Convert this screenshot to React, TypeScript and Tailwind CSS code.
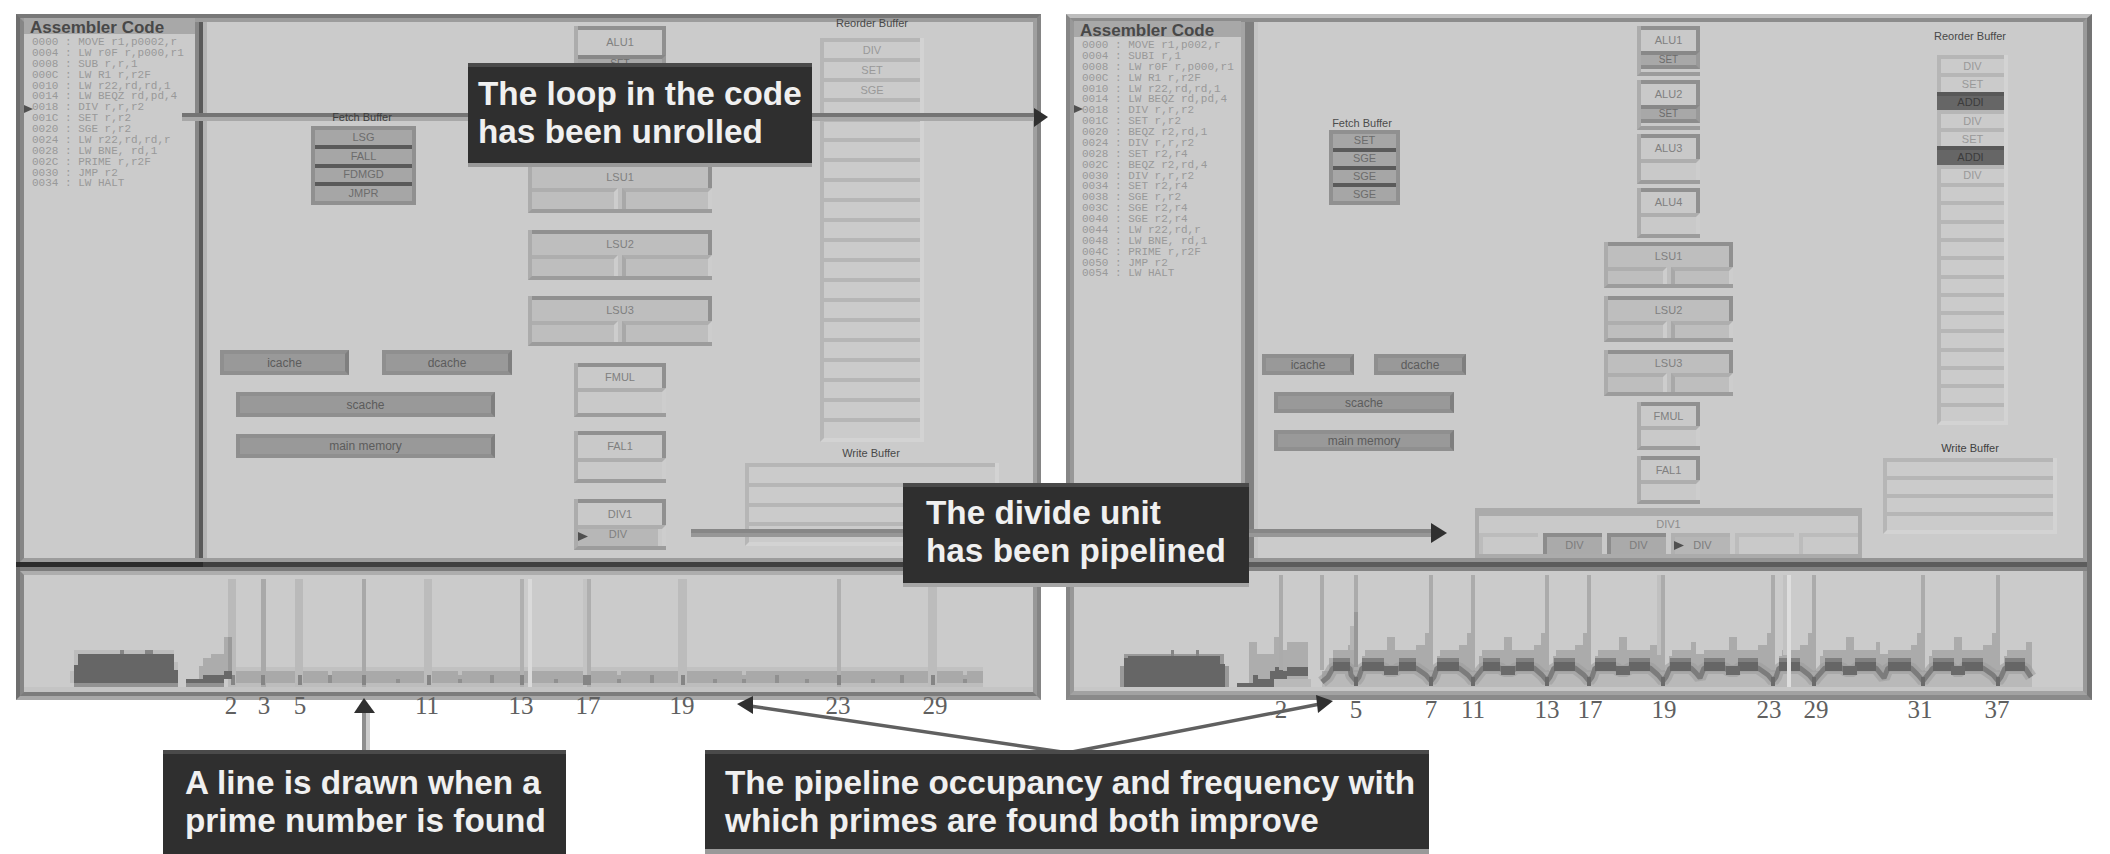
import React from "react";

const SANS = "font-['Liberation_Sans',Arial,sans-serif]";

const leftCode = [
  "0000 : MOVE r1,p0002,r", "0004 : LW r0F r,p000,r1", "0008 : SUB r,r,1", "000C : LW R1 r,r2F",
  "0010 : LW r22,rd,rd,1", "0014 : LW BEQZ rd,pd,4", "0018 : DIV r,r,r2", "001C : SET r,r2",
  "0020 : SGE r,r2", "0024 : LW r22,rd,rd,r", "0028 : LW BNE, rd,1", "002C : PRIME r,r2F",
  "0030 : JMP r2", "0034 : LW HALT",
];

const rightCode = [
  "0000 : MOVE r1,p002,r", "0004 : SUBI r,1", "0008 : LW r0F r,p000,r1", "000C : LW R1 r,r2F",
  "0010 : LW r22,rd,rd,1", "0014 : LW BEQZ rd,pd,4", "0018 : DIV r,r,r2", "001C : SET r,r2",
  "0020 : BEQZ r2,rd,1", "0024 : DIV r,r,r2", "0028 : SET r2,r4", "002C : BEQZ r2,rd,4",
  "0030 : DIV r,r,r2", "0034 : SET r2,r4", "0038 : SGE r,r2", "003C : SGE r2,r4",
  "0040 : SGE r2,r4", "0044 : LW r22,rd,r", "0048 : LW BNE, rd,1", "004C : PRIME r,r2F",
  "0050 : JMP r2", "0054 : LW HALT",
];

function CodePanel({ lines, className }: { lines: string[]; className: string }) {
  return (
    <div className={`flex flex-col bg-[#cbcbcb] ${className}`}>
      <h2 className={`h-4 pl-[6px] text-[17px] leading-[19px] font-bold text-[#484848] bg-[#a8a8a8] whitespace-nowrap ${SANS}`}>
        Assembler Code
      </h2>
      <div className="flex flex-col pl-2 pt-[3px] font-['Liberation_Mono',monospace] text-[11px] leading-[10.88px] text-[#999999]">
        {lines.map((l, i) => (
          <div key={i} className="whitespace-pre">{l}</div>
        ))}
      </div>
    </div>
  );
}

const at = (x: number, y: number, w?: number, h?: number): React.CSSProperties => ({ left: x, top: y, width: w, height: h });

function Label({ x, y, text, tone = "text-[#808080]", size = "text-[11px]" }: { x: number; y: number; text: string; tone?: string; size?: string }) {
  return (
    <div className="absolute w-0 h-0 flex items-center justify-center" style={at(x, y)}>
      <span className={`whitespace-nowrap leading-none ${size} ${tone} ${SANS}`}>{text}</span>
    </div>
  );
}

type UnitProps = { x: number; y: number; w: number; h: number; head: number; label: string; slots?: number; shaded?: boolean; busy?: string };

function Unit({ x, y, w, h, head, label, slots = 1, shaded, busy }: UnitProps) {
  return (
    <div className={`absolute flex flex-col border-l-4 border-l-[#acacac] border-b-4 border-b-[#9c9c9c] ${shaded ? "bg-[#bebebe]" : "bg-[#c9c9c9]"}`} style={at(x, y, w, h)}>
      <div className="flex items-center justify-center border-t-4 border-r-4 border-[#909090] shrink-0" style={{ height: head }}>
        <span className={`text-[11px] leading-none text-[#808080] ${SANS}`}>{label}</span>
      </div>
      <div className="flex grow gap-1">
        {Array.from({ length: slots }, (_, i) => (
          <div
            key={i}
            className={`grow basis-0 border-t-4 border-r-4 flex items-center justify-center ${i > 0 ? "border-l-4 border-l-[#a8a8a8]" : ""} ${busy ? "bg-[#a8a8a8] border-t-[#888888] border-r-[#999999] border-b-4 border-b-[#8c8c8c] mb-1" : "border-t-[#aeaeae] border-r-[#cdcdcd]"}`}
          >
            {busy && <span className={`text-[10px] leading-none text-[#6c6c6c] ${SANS}`}>{busy}</span>}
          </div>
        ))}
      </div>
    </div>
  );
}

function Memory({ x, y, w, h, label }: { x: number; y: number; w: number; h: number; label: string }) {
  return (
    <div className="absolute flex items-center justify-center bg-[#999999] border-4 border-[#8f8f8f] border-r-[#7f7f7f]" style={at(x, y, w, h)}>
      <span className={`text-[12px] leading-none text-[#5c5c5c] whitespace-nowrap ${SANS}`}>{label}</span>
    </div>
  );
}

function Fetch({ x, y, w, h, rows }: { x: number; y: number; w: number; h: number; rows: string[] }) {
  return (
    <div className="absolute flex flex-col border-4 border-[#909090] bg-[#5a5a5a] gap-1" style={at(x, y, w, h)}>
      {rows.map((r, i) => (
        <div key={i} className="grow basis-0 flex items-center justify-center bg-[#a6a6a6]">
          <span className={`text-[11px] leading-none text-[#6c6c6c] ${SANS}`}>{r}</span>
        </div>
      ))}
    </div>
  );
}

function Buffer({ x, y, w, h, count, rows = [] }: { x: number; y: number; w: number; h: number; count: number; rows?: string[] }) {
  return (
    <div className="absolute flex flex-col border-l-4 border-l-[#b6b6b6] border-r-4 border-r-[#d3d3d3] border-b-4 border-b-[#d3d3d3]" style={at(x, y, w, h)}>
      {Array.from({ length: count }, (_, i) => {
        const hot = rows[i] === "ADDI";
        return (
          <div key={i} className={`grow basis-0 min-h-0 border-t-4 flex items-center justify-center ${hot ? "bg-[#666666] border-t-[#585858] -ml-1" : "border-t-[#b6b6b6]"}`}>
            <span className={`text-[11px] leading-none ${hot ? "text-[#3c3c3c]" : "text-[#999999]"} ${SANS}`}>{rows[i] ?? ""}</span>
          </div>
        );
      })}
    </div>
  );
}

function DivideUnit() {
  const cells = ["", "DIV", "DIV", "DIV", "", ""];
  return (
    <div className="absolute left-[1475px] top-[508px] w-[387px] h-[50px] flex flex-col border-4 border-t-8 border-[#ababab] bg-[#c9c9c9]">
      <div className="h-[17px] flex items-center justify-center">
        <span className={`text-[11px] leading-none text-[#8c8c8c] ${SANS}`}>DIV1</span>
      </div>
      <div className="flex grow gap-[5px]">
        {cells.map((c, i) => (
          <div
            key={i}
            className={`grow basis-0 flex items-center justify-center border-t-4 border-l-4 ${c ? (i < 3 ? "bg-[#aaaaaa] border-[#8c8c8c]" : "bg-[#b6b6b6] border-[#b0b0b0]") : "border-[#bcbcbc]"}`}
          >
            <span className={`text-[11px] leading-none text-[#7c7c7c] ${SANS}`}>{c}</span>
          </div>
        ))}
      </div>
    </div>
  );
}

function Callout({ className, lines }: { className: string; lines: string[] }) {
  return (
    <div className={`absolute bg-[#2f2f2f] border-t-4 border-t-[#4a4a4a] text-[#f0f0f0] font-bold text-[33.3px] leading-[38px] whitespace-nowrap ${SANS} ${className}`}>
      {lines.map((l) => (
        <div key={l}>{l}</div>
      ))}
    </div>
  );
}

type Tick = [number, string];

const leftTicks: Tick[] = [[231, "2"], [264, "3"], [300, "5"], [427, "11"], [521, "13"], [588, "17"], [682, "19"], [838, "23"], [935, "29"]];
const rightTicks: Tick[] = [[1281, "2"], [1356, "5"], [1431, "7"], [1473, "11"], [1547, "13"], [1590, "17"], [1664, "19"], [1769, "23"], [1816, "29"], [1920, "31"], [1997, "37"]];

function Ticks({ items, y }: { items: Tick[]; y: number }) {
  return (
    <>
      {items.map(([x, t]) => (
        <div key={t} className="absolute w-0 flex justify-center" style={at(x, y)}>
          <span className="font-['Liberation_Serif',serif] text-[25px] leading-[24px] text-[#606060]">{t}</span>
        </div>
      ))}
    </>
  );
}

function LeftChart() {
  const lines: [number, number, string][] = [
    [228, 8, "#bababa"], [261, 5, "#a9a9a9"], [295, 8, "#bababa"], [362, 4, "#a8a8a8"], [424, 8, "#bcbcbc"],
    [520, 4, "#b0b0b0"], [583, 4, "#c3c3c3"], [587, 4, "#afafaf"], [678, 9, "#bcbcbc"], [837, 4, "#b0b0b0"], [928, 9, "#bcbcbc"],
  ];
  const marks = [328, 396, 458, 490, 554, 617, 650, 713, 742, 775, 805, 871, 900, 963];
  return (
    <svg className="block" width="1009" height="112" viewBox="24 575 1009 112" shapeRendering="crispEdges">
      <rect x="232" y="667" width="751" height="4" fill="#c1c1c1" />
      <rect x="232" y="671" width="751" height="12" fill="#a9a9a9" />
      <rect x="232" y="683" width="751" height="4" fill="#bdbdbd" />
      {marks.map((m, i) => (
        <rect key={m} x={m} y={i % 3 === 0 ? 675 : 679} width="4" height={i % 3 === 0 ? 8 : 4} fill="#909090" />
      ))}
      {[328, 458, 617, 742, 963].map((m) => (
        <rect key={m} x={m} y="671" width="4" height="4" fill="#c0c0c0" />
      ))}
      {lines.map(([x, w, f]) => (
        <rect key={x} x={x} y="579" width={w} height="108" fill={f} />
      ))}
      {lines.map(([x, w]) => (
        <rect key={x} x={x + (w > 5 ? 3 : 0)} y="675" width="4" height="10" fill="#858585" />
      ))}
      <rect x="528" y="579" width="4" height="108" fill="#dadada" />
      <path d="M70 683V671H74V650H174V662H178V683Z" fill="#bcbcbc" />
      <path d="M74 683V665H78V654H174V670H178V683Z" fill="#666666" />
      <path d="M120 650H124V654H120ZM145 650H153V654H145Z" fill="#858585" />
      <rect x="74" y="683" width="104" height="4" fill="#929292" />
      <path d="M199 679V666H203V658H211V654H224V637H232V679Z" fill="#acacac" />
      <rect x="228" y="637" width="4" height="40" fill="#9a9a9a" />
      <path d="M186 683V679H203V675H224V671H232V679H224V683Z" fill="#686868" />
      <path d="M186 683H224V687H186Z" fill="#929292" />
    </svg>
  );
}

type Plateau = { a: number; b: number; gap: "prime" | "bump" | "deep" | "end"; p: number };

const plateaus: Plateau[] = [
  { a: 1333, b: 1350, gap: "prime", p: 1356 },
  { a: 1362, b: 1384, gap: "bump", p: 1391 },
  { a: 1399, b: 1416, gap: "prime", p: 1431 },
  { a: 1437, b: 1459, gap: "prime", p: 1473 },
  { a: 1483, b: 1500, gap: "bump", p: 1508 },
  { a: 1516, b: 1534, gap: "prime", p: 1547 },
  { a: 1554, b: 1575, gap: "prime", p: 1589 },
  { a: 1595, b: 1616, gap: "bump", p: 1623 },
  { a: 1629, b: 1650, gap: "prime", p: 1663 },
  { a: 1670, b: 1691, gap: "deep", p: 1700 },
  { a: 1704, b: 1725, gap: "bump", p: 1733 },
  { a: 1738, b: 1758, gap: "prime", p: 1773 },
  { a: 1779, b: 1800, gap: "prime", p: 1814 },
  { a: 1825, b: 1842, gap: "bump", p: 1850 },
  { a: 1855, b: 1876, gap: "deep", p: 1884 },
  { a: 1888, b: 1911, gap: "prime", p: 1923 },
  { a: 1933, b: 1954, gap: "bump", p: 1958 },
  { a: 1962, b: 1983, gap: "prime", p: 1998 },
  { a: 2005, b: 2025, gap: "end", p: 2029 },
];

function occupancyArea() {
  let d = "M1322 683V671H1329V658H1333V650";
  for (const { b, gap, p } of plateaus) {
    if (gap === "bump") d += `H${p - 4}V637H${p + 4}V650`;
    if (gap === "deep") d += `H${b}V642H${p - 4}V654H${p + 4}V650`;
    if (gap === "prime") d += `H${Math.min(b, p - 8)}V645H${p - 6}V633H${p + 2}V671H${p + 6}V656H${p + 9}V650`;
    if (gap === "end") d += `H${p - 3}V642H${p + 3}V683Z`;
  }
  return d;
}

function occupancyValleys() {
  let d = "M1322 682L1328 677";
  for (const { a, b, gap, p } of plateaus) {
    d += `L${a} 668H${b}`;
    if (gap === "bump") d += `L${p - 4} 671H${p + 4}`;
    if (gap === "deep") d += `L${p - 4} 673L${p} 678`;
    if (gap === "prime") d += `L${p - 5} 675L${p} 681L${p + 3} 677`;
    if (gap === "end") d += `L${p + 2} 677`;
  }
  return d;
}

function RightChart() {
  const primes = [1279, 1320, 1354, 1429, 1471, 1545, 1587, 1661, 1771, 1812, 1921, 1996];
  return (
    <svg className="block" width="1009" height="116" viewBox="1074 571 1009 116">
      <path d={occupancyArea()} fill="#ababab" shapeRendering="crispEdges" />
      <path d="M1322 683V679L1333 672H2032V687H1322Z" fill="#b9b9b9" />
      <path d={occupancyValleys()} fill="none" stroke="#9c9c9c" strokeWidth="12" strokeLinejoin="bevel" opacity="0.6" />
      <path d={occupancyValleys()} fill="none" stroke="#7c7c7c" strokeWidth="5" strokeLinejoin="bevel" />
      {plateaus.map(({ a, b }) => (
        <React.Fragment key={a}>
          <rect x={a} y="658" width={b - a} height="4" fill="#808080" />
          <rect x={a} y="662" width={b - a} height="9" fill="#666666" />
        </React.Fragment>
      ))}
      {plateaus.filter((s) => s.gap === "bump").map(({ p }) => (
        <rect key={p} x={p - 7} y="666" width="14" height="9" fill="#6a6a6a" />
      ))}
      {plateaus.filter((s) => s.gap === "prime").map(({ p }) => (
        <rect key={p} x={p - 2} y="677" width="4" height="9" fill="#6a6a6a" />
      ))}
      <path d="M1249 683V642H1257V654H1274V637H1283V650H1287V642H1308V683Z" fill="#adadad" shapeRendering="crispEdges" />
      <path d="M1237 687V683H1253V675H1258V679H1270V671H1275V667H1283V671H1287V667H1308V676H1287V681H1274V687Z" fill="#686868" shapeRendering="crispEdges" />
      <g shapeRendering="crispEdges">
        <rect x="1274" y="679" width="37" height="8" fill="#b9b9b9" />
        {primes.map((x) => (
          <rect key={x} x={x} y="575" width="4" height="95" fill="#ababab" />
        ))}
        <rect x="1657" y="575" width="4" height="80" fill="#c0c0c0" />
        <rect x="1354" y="612" width="4" height="55" fill="#989898" />
        <rect x="1350" y="626" width="4" height="24" fill="#b4b4b4" />
        <rect x="1783" y="575" width="4" height="80" fill="#c2c2c2" />
        <rect x="1787" y="575" width="4" height="112" fill="#dedede" />
        <path d="M1120 687V666H1124V654H1224V666H1229V687Z" fill="#999999" />
        <path d="M1124 687V658H1128V656H1220V664H1225V687Z" fill="#666666" />
        <path d="M1171 650H1174V656H1171ZM1196 650H1199V656H1196Z" fill="#858585" />
      </g>
    </svg>
  );
}

function Windows() {
  return (
    <div className="flex gap-[25px] pl-4 pt-[14px]">
      <section className="w-[1025px] h-[686px] flex flex-col border-l-4 border-l-[#6e6e6e] border-r-4 border-r-[#858585] border-t-4 border-t-[#787878] border-b-4 border-b-[#a8a8a8]">
        <div className="h-[544px] flex border-t-4 border-t-[#9c9c9c] border-l-4 border-l-[#868686] border-r-4 border-r-[#9f9f9f] border-b-4 border-b-[#9c9c9c]">
          <CodePanel lines={leftCode} className="w-[171px] -mt-1" />
          <div className="w-1 bg-[#868686]" />
          <div className="w-1 bg-[#5a5a5a]" />
          <div className="w-1 bg-[#b4b4b4]" />
          <div className="grow bg-[#cbcbcb]" />
        </div>
        <div className="h-[5px] flex -ml-1">
          <div className="w-[187px] bg-[#2b2b2b]" />
          <div className="grow bg-[#404040]" />
        </div>
        <div className="h-1 bg-[#7c7c7c]" />
        <div className="grow border-l-4 border-l-[#868686] border-r-4 border-r-[#989898] border-t-4 border-t-[#adadad] border-b-4 border-b-[#7c7c7c] bg-[#cbcbcb]">
          <LeftChart />
          <div className="h-[5px] bg-[#c4c4c4]" />
        </div>
      </section>
      <section className="w-[1026px] h-[686px] flex flex-col border-l-4 border-l-[#868686] border-r-[5px] border-r-[#747474] border-t-4 border-t-[#bdbdbd] border-b-[5px] border-b-[#8a8a8a]">
        <div className="h-[544px] flex border-t-4 border-t-[#8c8c8c] border-l-4 border-l-[#989898] border-r-4 border-r-[#999999] border-b-4 border-b-[#949494]">
          <CodePanel lines={rightCode} className="w-[167px] -mt-px" />
          <div className="w-1 bg-[#a4a4a4]" />
          <div className="w-[9px] bg-[#808080]" />
          <div className="w-1 bg-[#c4c4c4]" />
          <div className="grow bg-[#cbcbcb]" />
        </div>
        <div className="h-[5px] bg-[#5c5c5c]" />
        <div className="h-1 bg-[#838383]" />
        <div className="grow border-l-4 border-l-[#989898] border-r-4 border-r-[#999999] border-b-4 border-b-[#a2a2a2] bg-[#cbcbcb]">
          <RightChart />
          <div className="h-1 bg-[#c7c7c7]" />
        </div>
      </section>
    </div>
  );
}

function LeftDiagram() {
  return (
    <>
      <Fetch x={311} y={126} w={105} h={79} rows={["LSG", "FALL", "FDMGD", "JMPR"]} />
      <Unit x={574} y={26} w={92} h={50} head={29} label="ALU1" busy="SET" />
      <Unit x={528} y={163} w={184} h={50} head={25} label="LSU1" slots={2} shaded />
      <Unit x={528} y={230} w={184} h={50} head={25} label="LSU2" slots={2} shaded />
      <Unit x={528} y={296} w={184} h={50} head={25} label="LSU3" slots={2} shaded />
      <Unit x={574} y={363} w={92} h={54} head={25} label="FMUL" />
      <Unit x={574} y={431} w={92} h={52} head={27} label="FAL1" />
      <Unit x={574} y={499} w={92} h={51} head={26} label="DIV1" />
      <div className="absolute left-[578px] top-[529px] w-[80px] h-[17px] bg-[#b7b7b7]" />
      <Label x={618} y={534} text="DIV" />
      <Label x={872} y={23} text="Reorder Buffer" tone="text-[#484848]" />
      <Buffer x={820} y={38} w={104} h={404} count={20} rows={["DIV", "SET", "SGE"]} />
      <Label x={871} y={453} text="Write Buffer" tone="text-[#484848]" />
      <Buffer x={745} y={463} w={254} h={83} count={4} />
      <Memory x={220} y={350} w={129} h={25} label="icache" />
      <Memory x={382} y={350} w={130} h={25} label="dcache" />
      <Memory x={236} y={392} w={259} h={25} label="scache" />
      <Memory x={236} y={434} w={259} h={24} label="main memory" />
    </>
  );
}

function RightDiagram() {
  return (
    <>
      <Label x={1362} y={123} text="Fetch Buffer" tone="text-[#4c4c4c]" />
      <Fetch x={1329} y={130} w={71} h={75} rows={["SET", "SGE", "SGE", "SGE"]} />
      <Unit x={1637} y={26} w={63} h={50} head={25} label="ALU1" busy="SET" />
      <Unit x={1637} y={80} w={63} h={50} head={25} label="ALU2" busy="SET" />
      <Unit x={1637} y={134} w={63} h={50} head={25} label="ALU3" />
      <Unit x={1637} y={188} w={63} h={50} head={25} label="ALU4" />
      <Unit x={1604} y={242} w={129} h={46} head={25} label="LSU1" slots={2} shaded />
      <Unit x={1604} y={296} w={129} h={46} head={25} label="LSU2" slots={2} shaded />
      <Unit x={1604} y={350} w={129} h={46} head={23} label="LSU3" slots={2} shaded />
      <Unit x={1637} y={402} w={63} h={48} head={24} label="FMUL" />
      <Unit x={1637} y={456} w={63} h={48} head={24} label="FAL1" />
      <DivideUnit />
      <Label x={1970} y={36} text="Reorder Buffer" tone="text-[#484848]" />
      <Buffer x={1937} y={55} w={71} h={370} count={20} rows={["DIV", "SET", "ADDI", "DIV", "SET", "ADDI", "DIV"]} />
      <Label x={1970} y={448} text="Write Buffer" tone="text-[#404040]" />
      <Buffer x={1883} y={458} w={174} h={76} count={4} />
      <Memory x={1262} y={354} w={92} h={21} label="icache" />
      <Memory x={1374} y={354} w={92} h={21} label="dcache" />
      <Memory x={1274} y={392} w={180} h={21} label="scache" />
      <Memory x={1274} y={430} w={180} h={21} label="main memory" />
    </>
  );
}

function Arrows() {
  return (
    <svg className="absolute inset-0" width="2110" height="854" viewBox="0 0 2110 854">
      <path d="M24 105L33 109L24 113ZM1074 105L1083 109L1074 113ZM578 532L588 536.5L578 541ZM1674 541L1684 545.5L1674 550Z" fill="#505050" />
      <path d="M182 113H1036V117H182Z" fill="#747474" />
      <path d="M182 117H1036V121H182Z" fill="#a8a8a8" />
      <path d="M1034 108L1048 117L1034 127Z" fill="#303030" />
      <path d="M691 529H1432V533H691Z" fill="#878787" />
      <path d="M691 533H1432V537H691Z" fill="#979797" />
      <path d="M1431 523L1447 533L1431 543Z" fill="#303030" />
      <path d="M362 708H366V752H362Z" fill="#8e8e8e" />
      <path d="M366 708H370V752H366Z" fill="#cccccc" />
      <path d="M364 698L375 713H354Z" fill="#303030" />
      <path d="M750 706L1062 752M1072 752L1320 704" stroke="#606060" strokeWidth="3.5" fill="none" />
      <path d="M737 704L753 696V714ZM1333 701L1316 695L1318 713Z" fill="#303030" />
    </svg>
  );
}

export default function App() {
  return (
    <main className="relative w-[2110px] h-[854px] overflow-hidden bg-white">
      <Windows />
      <LeftDiagram />
      <RightDiagram />
      <Ticks items={leftTicks} y={694} />
      <Ticks items={rightTicks} y={698} />
      <Arrows />
      <Label x={362} y={117} text="Fetch Buffer" tone="text-[#3c3c3c]" />
      <Callout className="left-[468px] top-[63px] w-[344px] h-[104px] pl-[10px] pt-[8px] border-b-4 border-b-[#999999]" lines={["The loop in the code", "has been unrolled"]} />
      <Callout className="left-[903px] top-[483px] w-[346px] h-[104px] pl-[23px] pt-[7px] border-b-4 border-b-[#a6a6a6]" lines={["The divide unit", "has been pipelined"]} />
      <Callout className="left-[163px] top-[750px] w-[403px] h-[104px] pl-[22px] pt-[10px]" lines={["A line is drawn when a", "prime number is found"]} />
      <Callout className="left-[705px] top-[750px] w-[724px] h-[104px] pl-[20px] pt-[10px] border-b-[5px] border-b-[#999999]" lines={["The pipeline occupancy and frequency with", "which primes are found both improve"]} />
    </main>
  );
}
